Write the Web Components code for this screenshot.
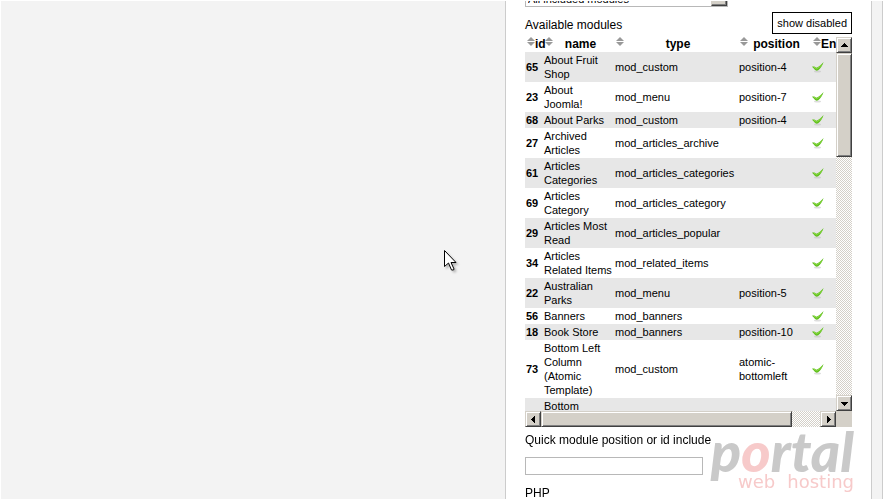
<!DOCTYPE html>
<html lang="en">
<head>
<meta charset="utf-8">
<title>Module options</title>
<style>
  body {
    margin: 0;
    background: #fff;
    color: #000;
    font: 12px/16px "Liberation Sans", Arial, sans-serif;
  }
</style>
</head>
<body>
<options-page></options-page>

<script>
const pageTemplate = document.createElement('template')
pageTemplate.innerHTML = `
<style>
  :host {
    display: grid;
    grid-template-columns: 504fr 367fr 11px;
    box-sizing: border-box;
    height: 100vh;
    padding: 1px 6px 1px 1px;
    overflow: hidden;
  }
  .side { background: #f3f3f3; }
  .edge { border-right: 1px solid #ccc; }
  options-panel { min-width: 0; min-height: 0; }
  mouse-pointer { position: absolute; left: 444px; top: 249px; }
  portal-logo { position: absolute; right: 35px; bottom: 8px; }
</style>
<div class="side"></div>
<options-panel>
  <module-select slot="filter"></module-select>
  <module-list></module-list>
</options-panel>
<div class="side edge"></div>
<portal-logo></portal-logo>
<mouse-pointer></mouse-pointer>
`

/**
 * The page: a grey column, the options panel and a narrow grey edge.
 */
class OptionsPage extends HTMLElement {
  constructor () {
    super()
    this.attachShadow({ mode: 'open' })
    this.shadowRoot.appendChild(pageTemplate.content.cloneNode(true))
  }
}

const panelTemplate = document.createElement('template')
panelTemplate.innerHTML = `
<style>
  :host {
    display: flex;
    flex-direction: column;
    padding: 0 19px;
    border: solid #ccc;
    border-width: 0 1px;
    overflow: hidden;
    font-size: 12px;
  }
  .heading {
    display: flex;
    justify-content: space-between;
    align-items: center;
    margin: 5px 0 3px;
  }
  button {
    height: 22px;
    padding: 0 4px;
    border: 1px solid #000;
    background: #fff;
    color: #000;
    font: 11px "Liberation Sans", Arial, sans-serif;
  }
  .heading span { padding-top: 3px; }
  .heading span, label { font-size: 12px; line-height: 16px; }
  label { margin-top: 5px; }
  input {
    box-sizing: border-box;
    width: 178px;
    height: 18px;
    margin: 9px 0 5px;
    border: 1px solid #b8b8b8;
    font: inherit;
  }
  textarea { flex: none; margin-top: 4px; }
</style>
<slot name="filter"></slot>
<div class="heading">
  <span>Available modules</span>
  <button type="button">show disabled</button>
</div>
<slot></slot>
<label for="quick">Quick module position or id include</label>
<input id="quick" type="text">
<label for="php">PHP</label>
<textarea id="php" rows="5"></textarea>
`

/**
 * The white panel with the module fields.
 */
class OptionsPanel extends HTMLElement {
  constructor () {
    super()
    this.attachShadow({ mode: 'open' })
    this.shadowRoot.appendChild(panelTemplate.content.cloneNode(true))
  }
}

const selectTemplate = document.createElement('template')
selectTemplate.innerHTML = `
<style>
  /* only the lower edge of the field is scrolled into view */
  :host {
    display: flex;
    flex: none;
    align-items: flex-end;
    width: 203px;
    height: 6px;
    overflow: hidden;
  }
  .field {
    flex: 1;
    display: grid;
    border: 1px solid #b8b8b8;
    box-sizing: border-box;
    height: 20px;
  }
  select, i { grid-area: 1 / 1; }
  select {
    appearance: none;
    box-sizing: border-box;
    width: 100%;
    height: 18px;
    padding: 5px 18px 0 2px;
    border: 0;
    background: #fff;
    color: #000;
    font: 11px/13px "Liberation Sans", Arial, sans-serif;
  }
  i {
    justify-self: end;
    box-sizing: border-box;
    width: 16px;
    height: 18px;
    border: 1px solid;
    border-color: #d4d0c8 #404040 #404040 #d4d0c8;
    box-shadow: inset -1px -1px #808080;
    background: #d4d0c8;
    pointer-events: none;
  }
</style>
<div class="field">
  <select aria-label="Modules filter"><option>All included modules</option></select>
  <i></i>
</div>
`

/**
 * Drop-down that filters the module list.
 */
class ModuleSelect extends HTMLElement {
  constructor () {
    super()
    this.attachShadow({ mode: 'open' })
    this.shadowRoot.appendChild(selectTemplate.content.cloneNode(true))
  }
}

const barTemplate = document.createElement('template')
barTemplate.innerHTML = `
<style>
  :host {
    display: flex;
    flex-direction: column;
    background: repeating-conic-gradient(#d4d0c8 0 25%, #fff 0 50%) 0 0 / 2px 2px;
  }
  :host([horizontal]) { flex-direction: row; }
  button, .thumb {
    box-sizing: border-box;
    border: 1px solid;
    border-color: #d4d0c8 #404040 #404040 #d4d0c8;
    box-shadow: inset 1px 1px #fff, inset -1px -1px #808080;
    background: #d4d0c8;
  }
  button {
    flex: none;
    width: 16px;
    height: 16px;
    padding: 0;
  }
  svg { display: block; margin: auto; }
  .track { flex: 1; display: flex; flex-direction: inherit; }
  .thumb { flex: 0 0 var(--thumb, 50%); }
  .next svg { transform: rotate(180deg); }
  :host([horizontal]) .prev svg { transform: rotate(-90deg); }
  :host([horizontal]) .next svg { transform: rotate(90deg); }
</style>
<button class="prev" type="button" aria-label="Scroll back"><svg width="7" height="7" shape-rendering="crispEdges"><path d="M3 1h1v1h1v1h1v1h1v1H0V4h1V3h1V2h1z"/></svg></button>
<div class="track"><div class="thumb"></div></div>
<button class="next" type="button" aria-label="Scroll forward"><svg width="7" height="7" shape-rendering="crispEdges"><path d="M3 1h1v1h1v1h1v1h1v1H0V4h1V3h1V2h1z"/></svg></button>
`

/**
 * A classic bevelled scroll bar. Fires 'step' with -1 or 1.
 */
class ScrollBar extends HTMLElement {
  constructor () {
    super()
    this.attachShadow({ mode: 'open' })
    this.shadowRoot.appendChild(barTemplate.content.cloneNode(true))
  }

  connectedCallback () {
    this.shadowRoot.querySelector('.prev').addEventListener('click', () => this.step(-1))
    this.shadowRoot.querySelector('.next').addEventListener('click', () => this.step(1))
  }

  /**
   * @param {number} direction - -1 for back, 1 for forward.
   */
  step (direction) {
    this.dispatchEvent(new CustomEvent('step', { detail: direction }))
  }
}

const sortIcon = '<svg width="8" height="10" viewBox="0 0 8 10" fill="#999"><path d="M4 0l4 4H0zM0 5h8L4 9z"/></svg>'
const tickIcon = `<svg width="12" height="12" viewBox="0 0 12 12">
  <ellipse cx="5.500" cy="10.500" rx="3.500" ry="1" fill="#bbb" opacity=".5"/>
  <path d="M0 5.800C1.500 5 3 5.600 4.200 6.800 6.500 6 9 4 11.600 1 10.500 4.500 8.500 7.500 6.200 9.200 5 10 3.500 9.800 2.600 8.600 1.800 7.400 1 6.400 0 5.800z" fill="#5fbf1c"/>
  <path d="M2 6.400C3 6.600 3.600 7.300 4.400 7.800 6.500 7 8.500 5.300 10 3.600" fill="none" stroke="#92dd4a"/>
</svg>`

const modules = [
  [65, 'About Fruit Shop', 'mod_custom', 'position-4'],
  [23, 'About Joomla!', 'mod_menu', 'position-7'],
  [68, 'About Parks', 'mod_custom', 'position-4'],
  [27, 'Archived Articles', 'mod_articles_archive', ''],
  [61, 'Articles Categories', 'mod_articles_categories', ''],
  [69, 'Articles Category', 'mod_articles_category', ''],
  [29, 'Articles Most Read', 'mod_articles_popular', ''],
  [34, 'Articles Related Items', 'mod_related_items', ''],
  [22, 'Australian Parks', 'mod_menu', 'position-5'],
  [56, 'Banners', 'mod_banners', ''],
  [18, 'Book Store', 'mod_banners', 'position-10'],
  [73, 'Bottom Left Column (Atomic Template)', 'mod_custom', 'atomic-bottomleft']
]

const listTemplate = document.createElement('template')
listTemplate.innerHTML = `
<style>
  :host {
    display: grid;
    flex: none;
    grid-template-columns: minmax(0, 1fr) 16px;
    grid-template-rows: 374px 16px;
    background: #d4d0c8;
  }
  .view {
    overflow: auto;
    scrollbar-width: none;
    background: #fff;
  }
  table {
    width: 346px;
    table-layout: fixed;
    border-collapse: collapse;
    font-size: 11px;
    line-height: 14px;
  }
  .id { width: 18px; }
  .name { width: 71px; }
  .type { width: 124px; }
  .position { width: 73px; }
  thead th { padding: 0; }
  thead button {
    display: grid;
    width: 100%;
    padding: 0 0 0 2px;
    border: 0;
    background: none;
    color: #000;
    font: bold 12px/15px "Liberation Sans", Arial, sans-serif;
  }
  thead svg, thead span { grid-area: 1 / 1; }
  thead span { padding-left: 2px; text-align: center; }
  thead .tight span { padding-left: 8px; text-align: left; }
  tbody th, td { padding: 1px; text-align: left; }
  td { vertical-align: middle; }
  tbody tr:nth-child(odd) { background: #e7e7e7; }
  td svg { display: block; }
</style>
<div class="view">
  <table>
    <colgroup><col class="id"><col class="name"><col class="type"><col class="position"><col></colgroup>
    <thead>
      <tr>
        <th class="tight"><button type="button">${sortIcon}<span>id</span></button></th>
        <th><button type="button">${sortIcon}<span>name</span></button></th>
        <th><button type="button">${sortIcon}<span>type</span></button></th>
        <th><button type="button">${sortIcon}<span>position</span></button></th>
        <th class="tight"><button type="button">${sortIcon}<span>Enabled</span></button></th>
      </tr>
    </thead>
    <tbody></tbody>
  </table>
</div>
<scroll-bar style="--thumb: 30.400%"></scroll-bar>
<scroll-bar horizontal style="--thumb: 90%"></scroll-bar>
`

/**
 * The scrolling table of available modules.
 */
class ModuleList extends HTMLElement {
  constructor () {
    super()
    this.attachShadow({ mode: 'open' })
    this.shadowRoot.appendChild(listTemplate.content.cloneNode(true))
  }

  connectedCallback () {
    const view = this.shadowRoot.querySelector('.view')
    const [vertical, horizontal] = this.shadowRoot.querySelectorAll('scroll-bar')
    vertical.addEventListener('step', (event) => view.scrollBy(0, event.detail * 30))
    horizontal.addEventListener('step', (event) => view.scrollBy(event.detail * 30, 0))
    this.render()
  }

  /**
   * Fills the table body, one row for each module.
   */
  render () {
    const rows = modules.map(([id, name, type, position]) => `
      <tr><th scope="row">${id}</th><td>${name}</td><td>${type}</td><td>${position}</td><td>${tickIcon}</td></tr>`)
    rows.push('<tr><th></th><td>Bottom</td><td></td><td></td><td></td></tr>')
    this.shadowRoot.querySelector('tbody').innerHTML = rows.join('')
  }
}

const logoTemplate = document.createElement('template')
logoTemplate.innerHTML = `
<style>
  :host {
    display: block;
    color: #c9c9c9;
    pointer-events: none;
  }
  .brand {
    font: italic 900 56px/42px Lato, sans-serif;
  }
  .brand span, .tagline { color: #f7caca; }
  .tagline {
    display: flex;
    justify-content: flex-end;
    gap: 12px;
    font: 18px/20px "DejaVu Sans", sans-serif;
  }
</style>
<div class="brand">p<span>o</span>rtal</div>
<div class="tagline"><span>web</span><span>hosting</span></div>
`

/**
 * Hosting company mark in the lower right corner.
 */
class PortalLogo extends HTMLElement {
  constructor () {
    super()
    this.attachShadow({ mode: 'open' })
    this.shadowRoot.appendChild(logoTemplate.content.cloneNode(true))
  }
}

const pointerTemplate = document.createElement('template')
pointerTemplate.innerHTML = `
<style>
  :host { display: block; pointer-events: none; }
  svg { display: block; filter: drop-shadow(2px 2px 1px rgba(0, 0, 0, .25)); }
</style>
<svg width="14" height="23" viewBox="0 0 14 23">
  <path d="M.5 1.500v16l4-3.500 3 7h2l.5-1-3-6.500h5z" fill="#fff" stroke="#000"/>
</svg>
`

/**
 * Arrow pointer.
 */
class MousePointer extends HTMLElement {
  constructor () {
    super()
    this.attachShadow({ mode: 'open' })
    this.shadowRoot.appendChild(pointerTemplate.content.cloneNode(true))
  }
}

customElements.define('scroll-bar', ScrollBar)
customElements.define('module-select', ModuleSelect)
customElements.define('module-list', ModuleList)
customElements.define('options-panel', OptionsPanel)
customElements.define('portal-logo', PortalLogo)
customElements.define('mouse-pointer', MousePointer)
customElements.define('options-page', OptionsPage)
</script>
</body>
</html>
